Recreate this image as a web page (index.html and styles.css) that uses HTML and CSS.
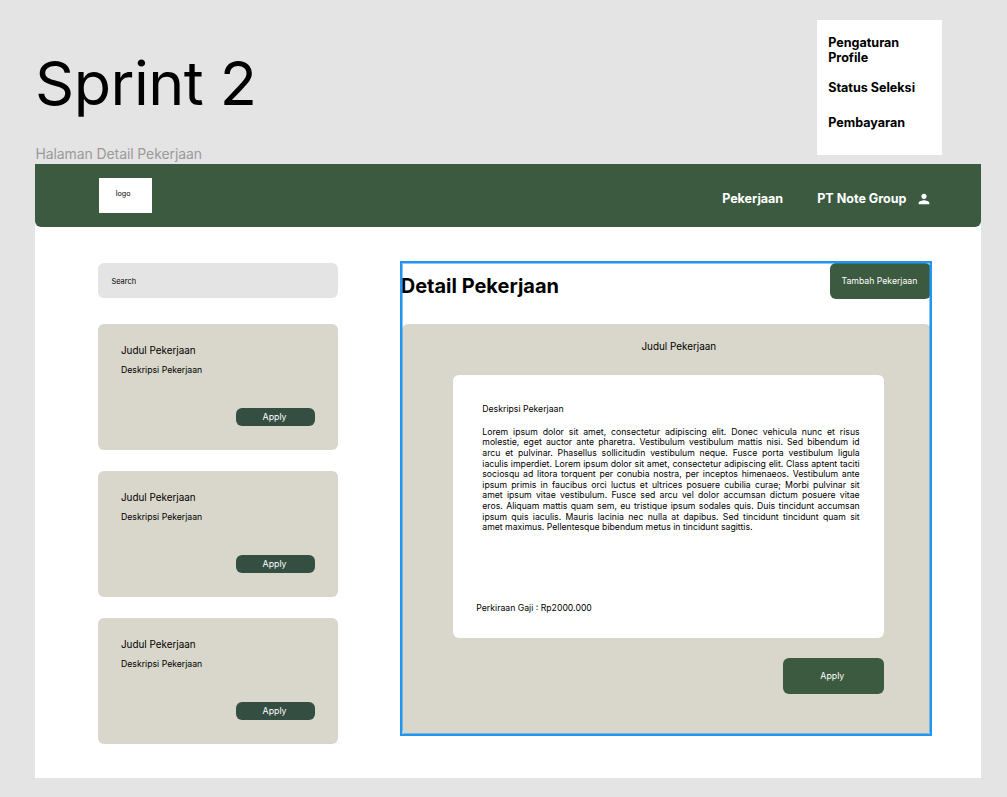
FILE: index.html
```html
<!DOCTYPE html>
<html lang="id">
<head>
<meta charset="utf-8">
<title>Sprint 2</title>
<link rel="stylesheet" href="styles.css">
</head>
<body>
<div class="board-head">
  <div class="titles">
    <h1 class="sprint">Sprint 2</h1>
    <p class="frame-label">Halaman Detail Pekerjaan</p>
  </div>
  <ul class="profile-menu">
    <li class="menu-item">Pengaturan<br>Profile</li>
    <li class="menu-item">Status Seleksi</li>
    <li class="menu-item">Pembayaran</li>
  </ul>
</div>
<div class="frame">
  <header class="navbar">
    <div class="logo">logo</div>
    <nav class="nav-links">
      <span class="nav-jobs">Pekerjaan</span>
      <span class="nav-company">PT Note Group</span>
      <svg class="person" viewBox="0 0 24 24"><path fill="#fff" d="M12 12c2.21 0 4-1.79 4-4s-1.79-4-4-4-4 1.79-4 4 1.79 4 4 4zm0 2c-2.67 0-8 1.34-8 4v2h16v-2c0-2.66-5.33-4-8-4z"/></svg>
    </nav>
  </header>
  <main class="content">
    <aside class="sidebar">
      <div class="search">Search</div>
      <article class="card">
        <h3 class="card-title">Judul Pekerjaan</h3>
        <p class="card-desc">Deskripsi Pekerjaan</p>
        <div class="card-apply">Apply</div>
      </article>
      <article class="card">
        <h3 class="card-title">Judul Pekerjaan</h3>
        <p class="card-desc">Deskripsi Pekerjaan</p>
        <div class="card-apply">Apply</div>
      </article>
      <article class="card">
        <h3 class="card-title">Judul Pekerjaan</h3>
        <p class="card-desc">Deskripsi Pekerjaan</p>
        <div class="card-apply">Apply</div>
      </article>
    </aside>
    <section class="detail">
      <div class="detail-head">
        <h2 class="detail-title">Detail Pekerjaan</h2>
        <div class="add-job">Tambah Pekerjaan</div>
      </div>
      <div class="panel">
        <h3 class="panel-title">Judul Pekerjaan</h3>
        <div class="sheet">
          <h4 class="sheet-title">Deskripsi Pekerjaan</h4>
          <p class="sheet-text">Lorem ipsum dolor sit amet, consectetur adipiscing elit. Donec vehicula nunc et risus molestie, eget auctor ante pharetra. Vestibulum vestibulum mattis nisi. Sed bibendum id arcu et pulvinar. Phasellus sollicitudin vestibulum neque. Fusce porta vestibulum ligula iaculis imperdiet. Lorem ipsum dolor sit amet, consectetur adipiscing elit. Class aptent taciti sociosqu ad litora torquent per conubia nostra, per inceptos himenaeos. Vestibulum ante ipsum primis in faucibus orci luctus et ultrices posuere cubilia curae; Morbi pulvinar sit amet ipsum vitae vestibulum. Fusce sed arcu vel dolor accumsan dictum posuere vitae eros. Aliquam mattis quam sem, eu tristique ipsum sodales quis. Duis tincidunt accumsan ipsum quis iaculis. Mauris lacinia nec nulla at dapibus. Sed tincidunt tincidunt quam sit <span class="keep">amet maximus.</span> Pellentesque bibendum metus in tincidunt sagittis.</p>
          <p class="salary">Perkiraan Gaji : Rp2000.000</p>
        </div>
        <div class="panel-apply">Apply</div>
      </div>
      <div class="selection"></div>
    </section>
  </main>
</div>
</body>
</html>
```

FILE: styles.css
```css
* { box-sizing: border-box; }

body {
  margin: 0;
  width: 1007px;
  height: 797px;
  overflow: hidden;
  background: #e4e4e4;
  color: #000;
  font-family: Inter, "Liberation Sans", sans-serif;
}

h1, h2, h3, h4, p, ul { margin: 0; padding: 0; font-weight: 400; list-style: none; }

.board-head {
  display: flex;
  justify-content: space-between;
  height: 164.3px;
  padding: 19.7px 64.7px 0 35.5px;
}

.titles { padding-top: 26.3px; }
.sprint { margin-left: -0.5px; font-size: 61px; line-height: 74px; letter-spacing: -0.5px; white-space: nowrap; }
.frame-label { margin-top: 26px; font-size: 14px; line-height: 16px; letter-spacing: -0.1px; color: #9b9b9b; white-space: nowrap; }

.profile-menu {
  display: flex;
  flex-direction: column;
  width: 125.6px;
  height: 135px;
  padding: 15px 11.5px 0;
  background: #fff;
}
.menu-item { font-size: 12.55px; line-height: 15px; font-weight: 700; white-space: nowrap; }
.menu-item:nth-child(2) { margin-top: 15px; }
.menu-item:nth-child(3) { margin-top: 20.8px; }

.frame { width: 945.7px; height: 613.7px; margin-left: 35.3px; background: #fff; }

.navbar {
  display: flex;
  justify-content: space-between;
  height: 62.4px;
  padding: 13.5px 49px 0 64.2px;
  border-radius: 0 0 6px 6px;
  background: #3b5a3f;
}
.logo { width: 52.5px; height: 35px; padding: 11.3px 0 0 16.3px; background: #fff; font-size: 7.2px; line-height: 10px; }
.nav-links { display: flex; height: 42.4px; align-items: center; color: #fff; font-size: 12.55px; line-height: 16px; font-weight: 700; white-space: nowrap; }
.nav-company { margin-left: 34px; }
.person { width: 16px; height: 16px; margin-left: 9.5px; }

.content { display: flex; justify-content: space-between; padding: 36.8px 49px 0 62.7px; }

.sidebar { width: 240.5px; }
.search { height: 34.8px; margin-bottom: 25.7px; padding: 12.5px 13.5px; border-radius: 6px; background: #e4e4e4; font-size: 7.4px; line-height: 11px; }
.card { height: 126.3px; margin-bottom: 20.7px; padding: 20px 23px 0; border-radius: 6px; background: #d9d7cb; }
.card-title { font-size: 9.9px; line-height: 13px; }
.card-desc { margin-top: 8.2px; font-size: 8.7px; line-height: 11px; }
.card-apply { width: 79.3px; height: 17.7px; margin: 32.1px 0 0 auto; padding-right: 2.5px; border-radius: 6px; background: #344e41; color: #fff; font-size: 8.8px; line-height: 18px; text-align: center; }

.detail { position: relative; width: 531.3px; height: 473px; }
.detail-head { display: flex; justify-content: space-between; height: 60.5px; }
.detail-title { padding-top: 11px; font-size: 20px; line-height: 24px; font-weight: 700; white-space: nowrap; }
.add-job { width: 100.7px; height: 35.3px; margin-right: 1px; padding-right: 2.5px; border-radius: 6px; background: #3b5a3f; color: #fff; font-size: 8.7px; line-height: 36px; text-align: center; white-space: nowrap; }

.panel { width: 529.3px; height: 411.5px; margin-left: 1.5px; padding: 16px 47.3px 0 51.3px; border-radius: 6px; background: #d9d7cb; }
.panel-title { padding-left: 20px; font-size: 9.9px; line-height: 13px; text-align: center; }
.sheet { height: 262.4px; margin-top: 22.5px; padding: 28.1px 24.5px 0 28.8px; border-radius: 6px; background: #fff; }
.sheet-title { font-size: 8.7px; line-height: 11px; }
.sheet-text { margin-top: 12.2px; font-size: 8.7px; line-height: 10.61px; text-align: justify; }
.keep { white-space: nowrap; }
.salary { margin: 69.7px 0 0 -6px; font-size: 8.7px; line-height: 11px; }
.panel-apply { width: 101.7px; height: 36px; margin: 20.5px 0 0 auto; padding-right: 2px; border-radius: 6px; background: #3b5a3f; color: #fff; font-size: 8.8px; line-height: 35.5px; text-align: center; }

.selection { position: absolute; inset: -2px -0.3px 0 -0.6px; border: 2px solid #2296ee; outline: 1px solid #2296ee88; outline-offset: -3px; pointer-events: none; }
```
